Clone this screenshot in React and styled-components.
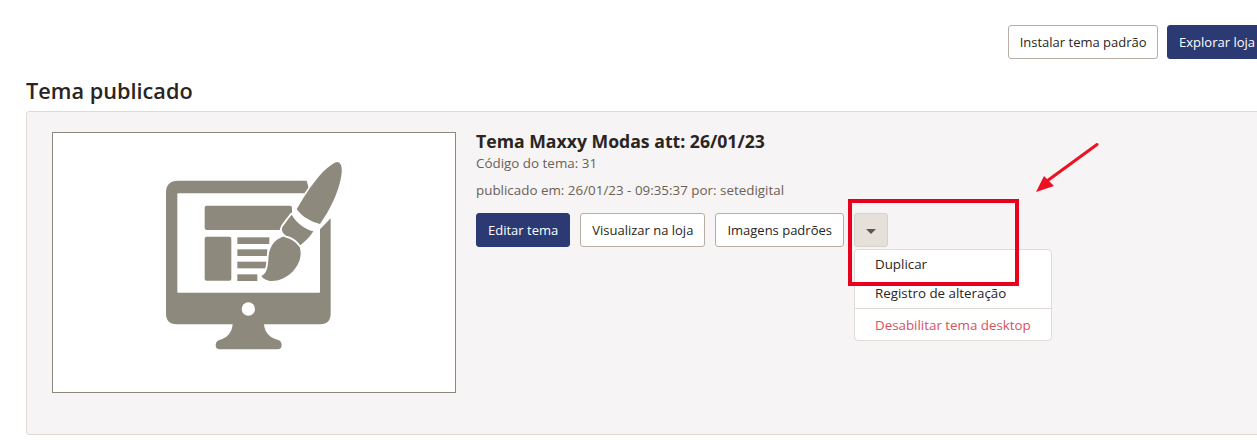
import React from 'react';
import styled, { createGlobalStyle } from 'styled-components';

const GlobalStyle = createGlobalStyle`
  html, body {
    margin: 0;
    height: 447px;
    overflow: hidden;
    background: #fff;
    font-family: "Open Sans", "Liberation Sans", sans-serif;
    font-size: 13px;
    color: #2a2522;
  }
`;

const Page = styled.div`
  width: 1300px;
  padding: 25px 0 0 26px;
  box-sizing: border-box;
`;

const TopActions = styled.div`
  display: flex;
  justify-content: flex-end;
  gap: 9px;
  padding-right: 33px;
`;

const Button = styled.button`
  height: 34px;
  padding: 0 ${props => props.$pad || 11}px;
  box-sizing: border-box;
  border-radius: 3px;
  border: 1px solid ${props => (props.$primary ? '#2b3a72' : '#b8aea3')};
  background: ${props => (props.$primary ? '#2b3a72' : '#fff')};
  color: ${props => (props.$primary ? '#fff' : '#2a2522')};
  font: inherit;
  white-space: nowrap;
`;

const Heading = styled.h2`
  margin: 17px 0 6px;
  font-size: 21.7px;
  line-height: 29px;
  font-weight: 600;
`;

const Card = styled.section`
  display: flex;
  gap: 20px;
  height: 324px;
  box-sizing: border-box;
  padding: 20px 25px;
  background: #f6f4f5;
  border: 1px solid #e0dcd5;
  border-radius: 3px;
`;

const Thumb = styled.div`
  width: 404px;
  height: 261px;
  box-sizing: border-box;
  padding: 0 8px 15px 0;
  display: flex;
  align-items: center;
  justify-content: center;
  background: #fff;
  border: 1px solid #8d897c;
`;

const Info = styled.div`
  display: flex;
  flex-direction: column;
`;

const ThemeName = styled.h3`
  margin: 0;
  font-size: 17.65px;
  line-height: 18px;
  font-weight: 700;
`;

const Meta = styled.p`
  margin: ${props => props.$top}px 0 0;
  font-size: 13.4px;
  line-height: 18px;
  color: #6b6154;
`;

const Actions = styled.div`
  position: relative;
  display: flex;
  gap: 10px;
  margin-top: 14px;
`;

const Toggle = styled.button`
  width: 34px;
  height: 34px;
  padding: 0;
  display: flex;
  align-items: center;
  justify-content: center;
  box-sizing: border-box;
  background: #e5e1da;
  border: 1px solid #d8d3c9;
  border-radius: 3px;

  &::after {
    content: '';
    margin-top: 3px;
    border-left: 5px solid transparent;
    border-right: 5px solid transparent;
    border-top: 5px solid #5c564c;
  }
`;

const Menu = styled.ul`
  position: absolute;
  top: 36px;
  left: 378px;
  width: 198px;
  height: 92px;
  margin: 0;
  padding: 0;
  box-sizing: border-box;
  list-style: none;
  background: #fff;
  border: 1px solid #e0dcd5;
  border-radius: 4px;
`;

const MenuItem = styled.li`
  height: ${props => props.$h}px;
  padding: ${props => props.$pt}px 20px 0;
  box-sizing: border-box;
  font-size: 13.35px;
  line-height: 18px;
  color: ${props => (props.$danger ? '#d9505f' : '#2a2522')};
  border-top: ${props => (props.$danger ? '1px solid #e0dcd5' : 'none')};
`;

const RedBox = styled.div`
  position: absolute;
  left: 848px;
  top: 199px;
  width: 171px;
  height: 87px;
  box-sizing: border-box;
  border: 4px solid #e8001c;
`;

const Arrow = styled.svg`
  position: absolute;
  left: 1030px;
  top: 138px;
`;

const ThemeIcon = () => (
  <svg width="240" height="230" viewBox="0 0 720 690">
    <path
      fill="#8d897c"
      d="M144 122H530L570 268L602 235V520Q602 553 570 553H402Q405 590 445 600Q455 604 455 616Q455 628 442 628H270Q257 628 257 616Q257 604 268 600Q305 590 308 553H140Q108 553 108 520V158Q108 122 144 122Z"
    />
    <rect x="142" y="160" width="428" height="298" rx="3" fill="#fff" />
    <circle cx="355" cy="507" r="20" fill="#fff" />
    <g fill="#8d897c">
      <rect x="224" y="197" width="262" height="73" rx="6" />
      <rect x="224" y="290" width="80" height="132" rx="6" />
      <rect x="322" y="292" width="96" height="20" />
      <rect x="322" y="328" width="90" height="20" />
      <rect x="322" y="365" width="90" height="20" />
      <rect x="322" y="403" width="60" height="20" />
    </g>
    <g fill="#8d897c" stroke="#fff" strokeWidth="11" paintOrder="stroke" strokeLinejoin="round">
      <path d="M466 289C492 286 512 310 512 340C512 382 470 423 425 423C410 423 400 416 394 408C410 400 413 385 415 360C415 320 436 294 466 289Z" />
      <path d="M485 224C500 250 525 267 550 274C537 295 522 306 511 316C500 300 486 291 468 287C456 278 453 268 458 260C466 248 476 236 485 224Z" />
      <path d="M622 66C638 68 638 95 631 122C621 165 600 208 570 252C545 246 518 232 500 208C525 165 565 100 605 74Q614 67 622 66Z" />
    </g>
  </svg>
);

export default function App() {
  return (
    <>
      <GlobalStyle />
      <Page>
        <TopActions>
          <Button $pad={10.5}>Instalar tema padrão</Button>
          <Button $primary>Explorar loja</Button>
        </TopActions>
        <Heading>Tema publicado</Heading>
        <Card>
          <Thumb>
            <ThemeIcon />
          </Thumb>
          <Info>
            <ThemeName>Tema Maxxy Modas att: 26/01/23</ThemeName>
            <Meta $top={4}>Código do tema: 31</Meta>
            <Meta $top={9}>publicado em: 26/01/23 - 09:35:37 por: setedigital</Meta>
            <Actions>
              <Button $primary>Editar tema</Button>
              <Button>Visualizar na loja</Button>
              <Button>Imagens padrões</Button>
              <Toggle aria-label="Mais opções" />
              <Menu>
                <MenuItem $h={29} $pt={5}>Duplicar</MenuItem>
                <MenuItem $h={29} $pt={5}>Registro de alteração</MenuItem>
                <MenuItem $h={32} $pt={7} $danger>Desabilitar tema desktop</MenuItem>
              </Menu>
            </Actions>
          </Info>
        </Card>
      </Page>
      <RedBox />
      <Arrow width="72" height="56" viewBox="0 0 72 56">
        <path d="M67 6.5L17 43" stroke="#ee1122" strokeWidth="3" strokeLinecap="round" fill="none" />
        <path d="M6 54L14 38L24 48Z" fill="#ee1122" />
      </Arrow>
    </>
  );
}
